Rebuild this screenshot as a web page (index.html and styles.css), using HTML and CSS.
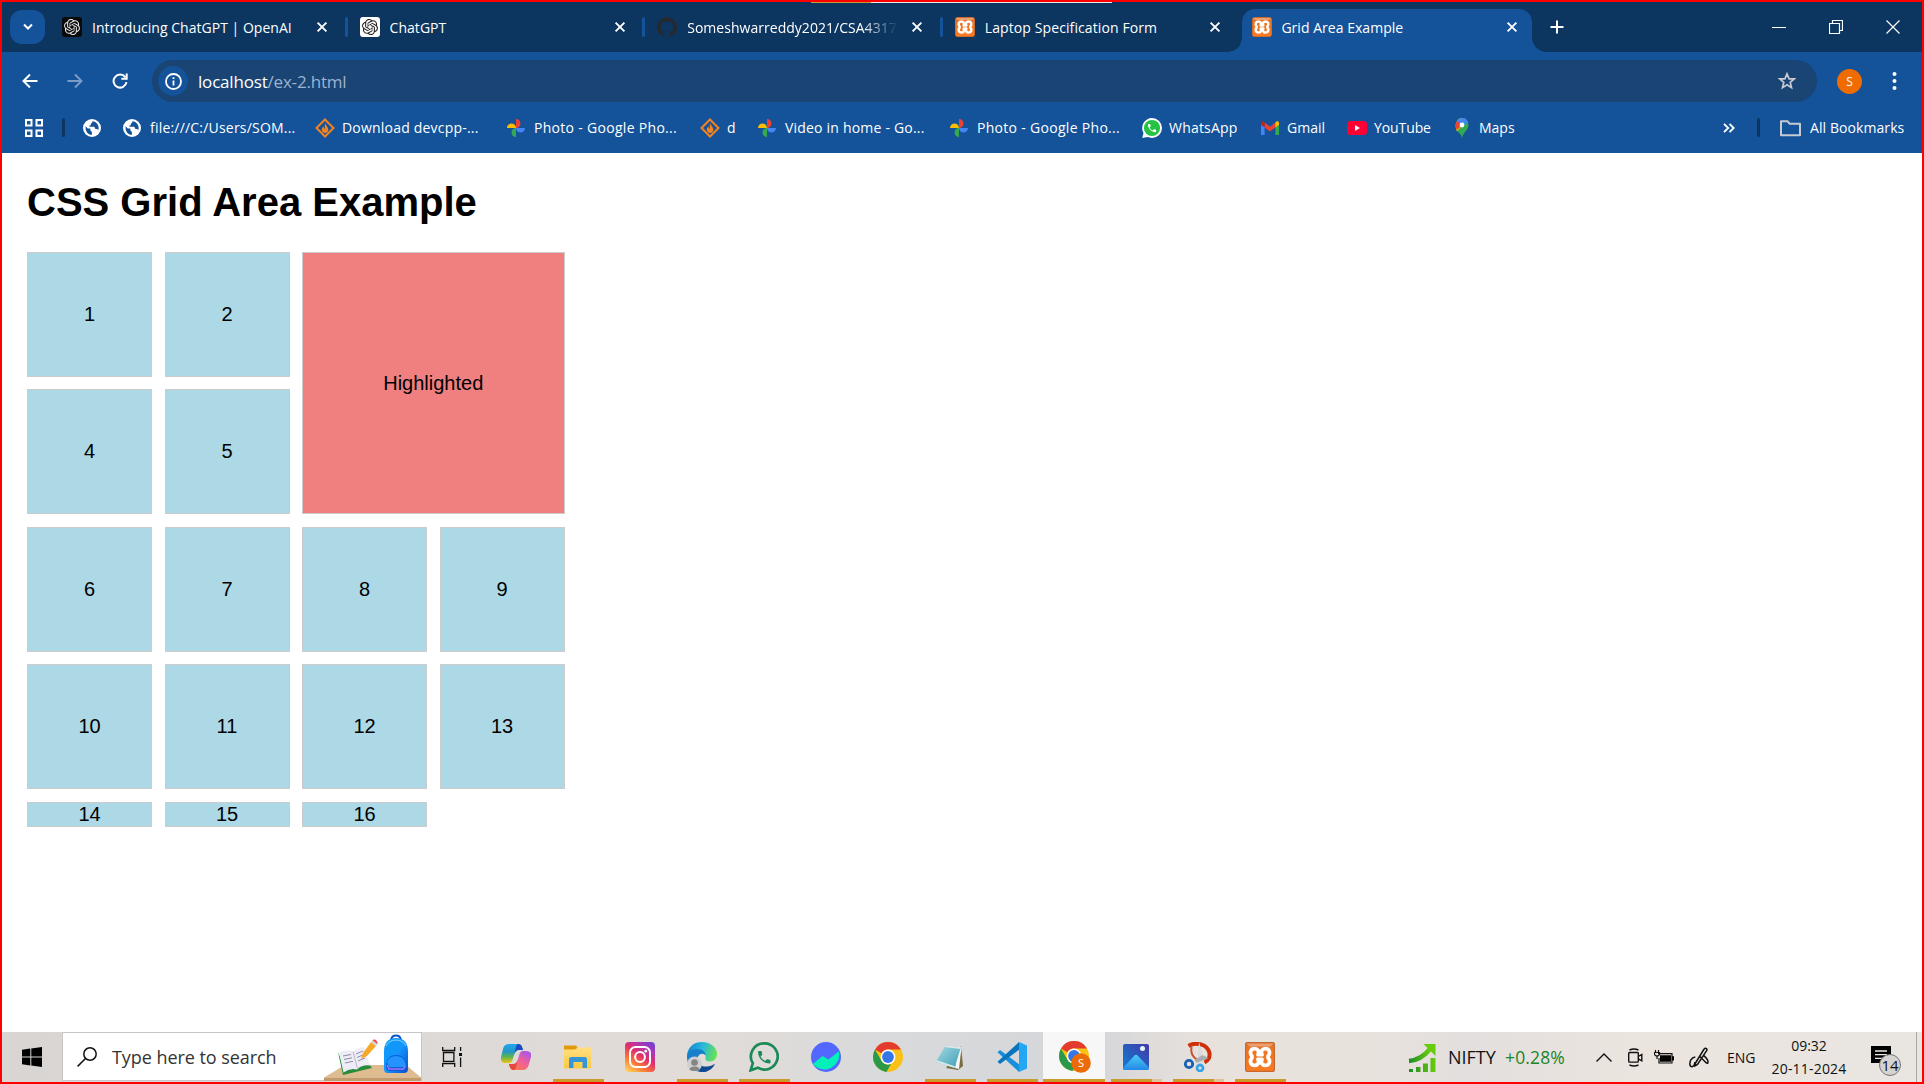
FILE: index.html
```html
<!DOCTYPE html>
<html lang="en">
<head>
<meta charset="utf-8">
<title>Grid Area Example</title>
<link rel="stylesheet" href="styles.css">
</head>
<body>
<svg class="defs" width="0" height="0" aria-hidden="true">
  <defs>
    <linearGradient id="g-orange" x1="0" y1="0" x2="0" y2="1"><stop offset="0" stop-color="#d8743a"/><stop offset=".3" stop-color="#ee7423"/><stop offset="1" stop-color="#fb7a24"/></linearGradient>
    <linearGradient id="g-insta" x1="0.1" y1="1" x2=".8" y2="0"><stop offset="0" stop-color="#ffd45e"/><stop offset=".3" stop-color="#fb7b35"/><stop offset=".58" stop-color="#e0306c"/><stop offset=".8" stop-color="#b235b0"/><stop offset="1" stop-color="#7a3fd0"/></linearGradient>
    <linearGradient id="g-cop1" x1="0" y1="0" x2="0" y2="1"><stop offset="0" stop-color="#1fa8ee"/><stop offset=".4" stop-color="#2497c5"/><stop offset=".65" stop-color="#56b357"/><stop offset="1" stop-color="#f3c411"/></linearGradient>
    <linearGradient id="g-cop2" x1=".8" y1="0" x2="0.2" y2="1"><stop offset="0" stop-color="#a855ea"/><stop offset=".5" stop-color="#f0609a"/><stop offset="1" stop-color="#fa7a48"/></linearGradient>
    <linearGradient id="g-folder" x1="0" y1="0" x2="0" y2="1"><stop offset="0" stop-color="#ffdf80"/><stop offset="1" stop-color="#fbc944"/></linearGradient>
    <linearGradient id="g-edge" x1="0" y1=".3" x2="1" y2=".5"><stop offset="0" stop-color="#1683d3"/><stop offset=".5" stop-color="#2ab8dc"/><stop offset="1" stop-color="#67e44d"/></linearGradient>
    <linearGradient id="g-note" x1="0" y1="0" x2="1" y2="1"><stop offset="0" stop-color="#a9dce4"/><stop offset="1" stop-color="#3a9cb4"/></linearGradient>
    <linearGradient id="g-photo" x1="1" y1="0" x2="0" y2="1"><stop offset="0" stop-color="#4439a8"/><stop offset="1" stop-color="#0e7fd4"/></linearGradient>
    <linearGradient id="g-hill" x1="0" y1="0" x2="0" y2="1"><stop offset="0" stop-color="#49cdf8"/><stop offset="1" stop-color="#2587e6"/></linearGradient>
    <linearGradient id="g-bag" x1="0" y1="0" x2="1" y2="1"><stop offset="0" stop-color="#0b9bf8"/><stop offset=".5" stop-color="#1496fb"/><stop offset="1" stop-color="#0c4ad0"/></linearGradient>
    <linearGradient id="g-bars" x1="0" y1="0" x2="1" y2="0"><stop offset="0" stop-color="#208a2a"/><stop offset="1" stop-color="#67cc0c"/></linearGradient>
    <symbol id="close" viewBox="0 0 12 12"><path d="M1.6 1.6l8.8 8.8M10.4 1.6l-8.8 8.8" stroke="#fff" stroke-width="1.9" fill="none"/></symbol>
    <symbol id="openai" viewBox="0 0 24 24"><path fill="currentColor" d="M22.2819 9.8211a5.9847 5.9847 0 0 0-.5157-4.9108 6.0462 6.0462 0 0 0-6.5098-2.9A6.0651 6.0651 0 0 0 4.9807 4.1818a5.9847 5.9847 0 0 0-3.9977 2.9 6.0462 6.0462 0 0 0 .7427 7.0966 5.98 5.98 0 0 0 .511 4.9107 6.051 6.051 0 0 0 6.5146 2.9001A5.9847 5.9847 0 0 0 13.2599 24a6.0557 6.0557 0 0 0 5.7718-4.2058 5.9894 5.9894 0 0 0 3.9977-2.9001 6.0557 6.0557 0 0 0-.7475-7.0729zm-9.022 12.6081a4.4755 4.4755 0 0 1-2.8764-1.0408l.1419-.0804 4.7783-2.7582a.7948.7948 0 0 0 .3927-.6813v-6.7369l2.02 1.1686a.071.071 0 0 1 .038.052v5.5826a4.504 4.504 0 0 1-4.4945 4.4944zm-9.6607-4.1254a4.4708 4.4708 0 0 1-.5346-3.0137l.142.0852 4.783 2.7582a.7712.7712 0 0 0 .7806 0l5.8428-3.3685v2.3324a.0804.0804 0 0 1-.0332.0615L9.74 19.9502a4.4992 4.4992 0 0 1-6.1408-1.6464zM2.3408 7.8956a4.485 4.485 0 0 1 2.3655-1.9728V11.6a.7664.7664 0 0 0 .3879.6765l5.8144 3.3543-2.0201 1.1685a.0757.0757 0 0 1-.071 0l-4.8303-2.7865A4.504 4.504 0 0 1 2.3408 7.872zm16.5963 3.8558L13.1038 8.364 15.1192 7.2a.0757.0757 0 0 1 .071 0l4.8303 2.7913a4.4944 4.4944 0 0 1-.6765 8.1042v-5.6772a.79.79 0 0 0-.407-.667zm2.0107-3.0231l-.142-.0852-4.7735-2.7818a.7759.7759 0 0 0-.7854 0L9.409 9.2297V6.8974a.0662.0662 0 0 1 .0284-.0615l4.8303-2.7866a4.4992 4.4992 0 0 1 6.6802 4.66zM8.3065 12.863l-2.02-1.1638a.0804.0804 0 0 1-.038-.0567V6.0742a4.4992 4.4992 0 0 1 7.3757-3.4537l-.142.0805L8.704 5.459a.7948.7948 0 0 0-.3927.6813zm1.0976-2.3654l2.602-1.4998 2.6069 1.4998v2.9994l-2.5974 1.4997-2.6067-1.4997Z"/></symbol>
    <symbol id="xampp" viewBox="0 0 30 30">
      <rect width="30" height="30" rx="2.2" fill="#c4682c"/><rect x="1.2" y="1.2" width="27.6" height="27.6" rx="1.6" fill="url(#g-orange)"/><path d="M1.5 1.5h27l-3 3h-21z" fill="#f6b083" opacity=".7"/>
      <path fill="none" stroke="#fff" stroke-width="3.800" stroke-linejoin="round" d="M13 12.700c1.700-3.700-.5-6.100-3.400-6.100-4.100 0-5.300 4.700-2.700 7.400v2c-2.600 2.700-1.400 7.400 2.700 7.400 2.900 0 5.100-2.400 3.400-6.100h4c-1.700 3.700.5 6.100 3.400 6.100 4.100 0 5.300-4.700 2.700-7.400v-2c2.600-2.700 1.400-7.400-2.700-7.400-2.900 0-5.100 2.400-3.400 6.100z"/>
    </symbol>
    <symbol id="globe" viewBox="0 0 18 18"><circle cx="9" cy="9" r="9" fill="#fff"/><path d="M2.600 7.200l2.200 2.200h2.600v2.200l1.500 1.500v2.700c-4-.2-6.700-3.500-6.300-8.600zM9.200 2.300c.5 1.200-.2 1.900-1.300 2.100v1.900H6.500v1.500h4.800l1.100 2.200h1.800l1 1.300c1.500-4-.9-8.600-6-9z" fill="#14529a"/></symbol>
    <symbol id="flame" viewBox="0 0 20 20"><path d="M8.300 16.800L1.500 10 10 1.500l1.800 1.700M11.700 3.200L18.500 10 10 18.500l-1.800-1.700" fill="none" stroke="#f58220" stroke-width="2"/><path d="M10.400 4.800c-.3 2.600 2.900 4 2.900 6.700 0 2-1.400 3.500-3.200 3.500S6.800 13.600 6.800 11.600c0-1.500.9-2.500 1.800-3.300 0 1.500.5 2 .9 2.700.8-1.800-.4-4 .9-6.200z" fill="#f58220"/></symbol>
    <symbol id="gphotos" viewBox="0 0 18 18"><path fill="#ea4335" d="M9 0c2.600 0 4.500 2 4.500 4.500S11.500 9 9 9z"/><path fill="#4285f4" d="M18 9c0 2.600-2 4.500-4.500 4.500S9 11.600 9 9z"/><path fill="#34a853" d="M9 18c-2.600 0-4.500-2-4.500-4.500S6.500 9 9 9z"/><path fill="#fbbc04" d="M0 9c0-2.600 2-4.500 4.500-4.500S9 6.500 9 9z"/></symbol>
    <symbol id="phone" viewBox="0 0 24 24"><path fill="currentColor" d="M6.620 10.790c1.440 2.830 3.760 5.140 6.590 6.590l2.200-2.200c.27-.27.67-.36 1.020-.24 1.120.37 2.330.57 3.570.57.55 0 1 .45 1 1V20c0 .55-.45 1-1 1-9.390 0-17-7.610-17-17 0-.55.45-1 1-1h3.500c.55 0 1 .45 1 1 0 1.250.2 2.450.57 3.570.11.35.03.74-.25 1.020l-2.200 2.200z"/></symbol>
    <symbol id="chrome" viewBox="0 0 30 30">
      <circle cx="15" cy="15" r="15" fill="#fbc116"/><path fill="#e33b2e" d="M2 7.500A15 15 0 0 1 28 7.500H15a7.500 7.500 0 0 0-6.500 3.750z"/><path fill="#2a9a48" d="M2 7.500L8.500 18.750A7.500 7.500 0 0 0 15 22.500l3-.6-4.500 8A15 15 0 0 1 2 7.500z"/><circle cx="15" cy="15" r="7.400" fill="#fff"/><circle cx="15" cy="15" r="5.900" fill="#3577e8"/>
    </symbol>
  </defs>
</svg>

<div class="screen">
  <header class="browser">
    <div class="snap-hint"></div>
    <div class="tabstrip">
      <button class="tab-search" aria-label="Search tabs"><svg width="10" height="8" viewBox="0 0 10 8"><path d="M1 1.500l4 4 4-4" fill="none" stroke="#fff" stroke-width="2"/></svg></button>
      <div class="tab"><span class="fav dark"><svg width="16" height="16"><use href="#openai"/></svg></span><span class="tab-title">Introducing ChatGPT | OpenAI</span><svg class="x" width="12" height="12"><use href="#close"/></svg></div>
      <div class="tab sep"><span class="fav light"><svg width="16" height="16"><use href="#openai"/></svg></span><span class="tab-title">ChatGPT</span><svg class="x" width="12" height="12"><use href="#close"/></svg></div>
      <div class="tab sep"><svg class="fav" viewBox="0 0 24 24"><path fill="#24292f" d="M12 .297c-6.630 0-12 5.373-12 12 0 5.303 3.438 9.800 8.205 11.385.6.113.82-.258.82-.577 0-.285-.01-1.040-.015-2.040-3.338.724-4.042-1.610-4.042-1.610C4.422 18.070 3.633 17.700 3.633 17.700c-1.087-.744.084-.729.084-.729 1.205.084 1.838 1.236 1.838 1.236 1.070 1.835 2.809 1.305 3.495.998.108-.776.417-1.305.76-1.605-2.665-.3-5.466-1.332-5.466-5.930 0-1.310.465-2.380 1.235-3.220-.135-.303-.54-1.523.105-3.176 0 0 1.005-.322 3.300 1.230.96-.267 1.980-.399 3-.405 1.020.006 2.040.138 3 .405 2.280-1.552 3.285-1.230 3.285-1.230.645 1.653.24 2.873.12 3.176.765.84 1.230 1.910 1.230 3.220 0 4.610-2.805 5.625-5.475 5.920.42.36.81 1.096.81 2.220 0 1.606-.015 2.896-.015 3.286 0 .315.21.69.825.57C20.565 22.092 24 17.592 24 12.297c0-6.627-5.373-12-12-12"/></svg><span class="tab-title fade">Someshwarreddy2021/CSA4317</span><svg class="x" width="12" height="12"><use href="#close"/></svg></div>
      <div class="tab sep"><svg class="fav"><use href="#xampp"/></svg><span class="tab-title t-laptop">Laptop Specification Form</span><svg class="x" width="12" height="12"><use href="#close"/></svg></div>
      <div class="tab active"><svg class="fav"><use href="#xampp"/></svg><span class="tab-title">Grid Area Example</span><svg class="x" width="12" height="12"><use href="#close"/></svg></div>
      <svg class="newtab" width="14" height="14" viewBox="0 0 14 14"><path d="M7 .5v13M.5 7h13" stroke="#fff" stroke-width="2"/></svg>
      <div class="winctl">
        <svg width="14" height="14" viewBox="0 0 14 14"><path d="M0 7.500h14" stroke="#fff"/></svg>
        <svg width="14" height="14" viewBox="0 0 14 14"><path d="M.5 3.500h10v10h-10zM3.500 3.500v-3h10v10h-3" fill="none" stroke="#fff" stroke-width="1.200"/></svg>
        <svg width="14" height="14" viewBox="0 0 14 14"><path d="M.5.5l13 13M13.500.5l-13 13" stroke="#fff" stroke-width="1.200"/></svg>
      </div>
    </div>

    <div class="toolbar">
      <svg class="nav" viewBox="0 0 16 16"><path d="M15.500 8H2M8 1.500L1.500 8 8 14.500" fill="none" stroke="#fff" stroke-width="2"/></svg>
      <svg class="nav" viewBox="0 0 16 16"><path d="M.5 8H14M8 1.500L14.500 8 8 14.500" fill="none" stroke="#7c9cc8" stroke-width="1.900"/></svg>
      <svg class="nav" viewBox="0 0 16 16"><path d="M13.300 4.200A6.500 6.500 0 1 0 14.500 9.200M14.700.6v5.200H9.300" fill="none" stroke="#fff" stroke-width="2"/></svg>
      <div class="omnibox">
        <span class="info"><svg width="17" height="17" viewBox="0 0 17 17"><circle cx="8.500" cy="8.500" r="7.500" fill="none" stroke="#fff" stroke-width="1.800"/><path d="M8.500 7.500v5M8.500 4.300v1.800" stroke="#fff" stroke-width="1.800"/></svg></span>
        <span class="url"><b>localhost</b>/ex-2.html</span>
        <svg class="star" width="18" height="18" viewBox="0 0 18 18"><path d="M9 1.800l2.100 5h5.200l-4.100 3.500 1.300 5.300L9 12.800l-4.500 2.800 1.300-5.300-4.100-3.500h5.200z" fill="none" stroke="#c7cad2" stroke-width="1.700"/></svg>
      </div>
      <span class="avatar">S</span>
      <svg class="menu" width="5" height="18" viewBox="0 0 5 18"><circle cx="2.500" cy="2" r="2" fill="#fff"/><circle cx="2.500" cy="9" r="2" fill="#fff"/><circle cx="2.500" cy="16" r="2" fill="#fff"/></svg>
    </div>

    <nav class="bookmarks">
      <svg class="apps" width="18" height="18" viewBox="0 0 18 18"><path d="M1 1h5.500v5.500H1zM11.500 1H17v5.500h-5.500zM1 11.500h5.500V17H1zM11.500 11.500H17V17h-5.500z" fill="none" stroke="#fff" stroke-width="2"/></svg>
      <span class="divider"></span>
      <a class="bm w40"><svg class="inset"><use href="#globe"/></svg></a>
      <a class="bm w192"><svg class="inset"><use href="#globe"/></svg><span class="wide">file:///C:/Users/SOM...</span></a>
      <a class="bm w192"><svg><use href="#flame"/></svg><span class="wide">Download devcpp-...</span></a>
      <a class="bm w193"><svg class="inset"><use href="#gphotos"/></svg><span class="wider">Photo - Google Pho...</span></a>
      <a class="bm w58"><svg><use href="#flame"/></svg><span>d</span></a>
      <a class="bm w192"><svg class="inset"><use href="#gphotos"/></svg><span class="wide">Video in home - Go...</span></a>
      <a class="bm w192"><svg class="inset"><use href="#gphotos"/></svg><span class="wider">Photo - Google Pho...</span></a>
      <a class="bm w118"><svg viewBox="0 0 20 20"><path d="M10 0a10 10 0 0 1 0 20l-4.500-1.100L.3 20l1.200-5A10 10 0 0 1 10 0z" fill="#fff"/><circle cx="10" cy="10" r="8.100" fill="#25c244"/><svg x="4.500" y="4.500" width="11" height="11" class="white"><use href="#phone"/></svg></svg><span class="wide">WhatsApp</span></a>
      <a class="bm w87"><svg viewBox="0 0 20 20"><path d="M1 5v12h3.600V8z" fill="#4285f4"/><path d="M19 5v12h-3.600V8z" fill="#34a853"/><path d="M4.600 4.500L10 8.700l5.400-4.200v5L10 13.500 4.600 9.500z" fill="#ea4335"/><path d="M1 5.200C1 3 3.200 2.600 4.600 4.500v5L1 6.800z" fill="#c5221f"/><path d="M19 5.200c0-2.200-2.200-2.600-3.600-.7v5L19 6.800z" fill="#fbbc04"/></svg><span>Gmail</span></a>
      <a class="bm w104"><svg viewBox="0 0 20 20"><rect y="3" width="20" height="14" rx="3.500" fill="#f03"/><path d="M8 7l5 3-5 3z" fill="#fff"/></svg><span class="tight">YouTube</span></a>
      <a class="bm"><svg viewBox="0 0 20 20"><path d="M3.700 8.500a6.300 8 0 0 1 12.800-1.600c.3 5-4.400 6.100-6.500 13.100-.6-5-5.900-5.600-6.300-11.500z" fill="#34a853"/><path d="M3.700 7A6.300 7 0 0 1 10 .3L10 7.500l-5 6c-.9-2.200-1.400-4-1.300-6.500z" fill="#fbbc04"/><path d="M3.700 7c0-2 .8-3.500 1.600-4.500L10 6.500 5 12c-1-1.700-1.400-3-1.300-5z" fill="#ea4335"/><path d="M5.300 2.500C8-.7 14-1.300 16 4L10 9z" fill="#4285f4"/><circle cx="10" cy="7" r="2.400" fill="#fff"/></svg><span>Maps</span></a>
      <svg class="more" width="12" height="10" viewBox="0 0 12 10"><path d="M1 .8L5.200 5 1 9.200M6.500.8L10.700 5 6.500 9.200" fill="none" stroke="#fff" stroke-width="1.900"/></svg>
      <span class="divider d2"></span>
      <svg class="folder" width="21" height="18" viewBox="0 0 21 18"><path d="M1 2.200h6.500l2 2.500H20v11.500H1z" fill="none" stroke="#c7cad2" stroke-width="2" stroke-linejoin="round"/></svg>
      <span class="all">All Bookmarks</span>
    </nav>
  </header>

  <main class="page">
    <h1>CSS Grid Area Example</h1>
    <div class="grid">
      <div class="cell">1</div><div class="cell">2</div><div class="cell highlight">Highlighted</div>
      <div class="cell">4</div><div class="cell">5</div>
      <div class="cell">6</div><div class="cell">7</div><div class="cell">8</div><div class="cell">9</div>
      <div class="cell">10</div><div class="cell">11</div><div class="cell">12</div><div class="cell">13</div>
      <div class="cell">14</div><div class="cell">15</div><div class="cell">16</div>
    </div>
  </main>

  <footer class="taskbar">
    <div class="start"><svg width="20" height="20" viewBox="0 0 20 20"><path d="M0 2.800L8.300 1.500v8H0zM9.300 1.400L20 0v9.500H9.300zM0 10.500h8.300v8L0 17.200zM9.300 10.500H20V20L9.300 18.600z" fill="#000"/></svg></div>
    <div class="search">
      <svg class="glass" width="20" height="20" viewBox="0 0 20 20"><circle cx="13" cy="7" r="6.200" fill="none" stroke="#111" stroke-width="1.500"/><path d="M8.500 11.500L.6 19.400" stroke="#111" stroke-width="1.500"/></svg>
      <span class="placeholder">Type here to search</span>
      <svg class="art" width="97" height="47" viewBox="0 0 97 47">
        <path d="M0 43.500L21 31h61l15 12.500z" fill="#dfbb90"/><path d="M0 43.500h97V47H0z" fill="#c39a6b"/>
        <path d="M14 18l5 23 29-7-3-4-24 5z" fill="#288c3c"/><path d="M15 18.500q8-4 14-1 7-5 11-4l6 18q-8-1-13 4-7-2-13.500 3z" fill="#eeedf7"/><path d="M29 17.500l4.500 17" stroke="#b7b5cc" fill="none"/><path d="M19 22l8-1.500M20 25.500l8-1.700M21 29l8-1.700M32 20l7-3M33 23.500l7-3M34 27l7-3" stroke="#8e8da5" fill="none"/>
        <path d="M37 25l2-6 8-11 5 4-9 10z" fill="#f6a928"/><path d="M47 8l1.500-1.700 5 4L52 12z" fill="#d2d5dc"/><path d="M48.500 6.300c2-2 5.500.5 5 4z" fill="#ee4d4d"/>
        <path d="M67 6c1-6 9-6 10 0" fill="none" stroke="#0a56c8" stroke-width="2"/><path d="M60 18q0-14 12-14t12 14v17q0 4-4 4H64q-4 0-4-4z" fill="url(#g-bag)"/><path d="M62 12q3-6 10-6t10 6" fill="none" stroke="#7fd0ff"/><path d="M62 33q0-12 10-12t10 12q0 4-4 4H66q-4 0-4-4z" fill="#0a5ee0"/><path d="M63 28q2-6 9-6t9 6l1 5H65z" fill="#2494fc"/><path d="M63 31l2 4h14l2-2" fill="none" stroke="#a174f2" stroke-width="1.500"/>
      </svg>
    </div>
    <div class="taskview"><svg width="20" height="20" viewBox="0 0 20 20"><path d="M.7 0v3.500h12V0M.7 20v-3.500h12V20M1.500 5.500h10.400v8.900H1.500zM18.600 0v4M18.600 10.500V20" fill="none" stroke="#111" stroke-width="1.300"/><path d="M17 6h3v3h-3z" fill="#111"/></svg></div>
    <div class="app"><svg viewBox="0 0 30 30"><path d="M9 2h8c3 0 4 2 5 6h-4c-3 0-4 2-5 5l-1.500 5C10 22 8 21 5 21c-4 0-6-2-5-6l2-8c1-4 3-5 7-5z" fill="url(#g-cop1)"/><path d="M17 2c3 0 4 2 5 6h-4c-3 0-4 2-5 5l2-8c.4-1.600 1-3 2-3z" fill="#1b49c4"/><path d="M21 28h-8c-3 0-4-2-5-6h4c3 0 4-2 5-5l1.500-5c1.500-4 3.500-3 6.500-3 4 0 6 2 5 6l-2 7c-1 4-3 6-7 6z" fill="url(#g-cop2)"/><path d="M13 28c-3 0-4-2-5-6h4c3 0 4-2 5-5l-2 8c-.4 1.600-1 3-2 3z" fill="#e3473e"/></svg></div>
    <div class="app open"><svg viewBox="0 0 30 30"><path d="M1 3.500h12l2 3H27v5H1z" fill="#e09b0d"/><path d="M1 7.500h11l3-2h13v20q0 1-1 1H2q-1 0-1-1z" fill="url(#g-folder)"/><path d="M6 26V17q0-2 2-2h14q2 0 2 2v9h-4.500v-6h-9v6z" fill="#3895d5"/></svg></div>
    <div class="app"><svg viewBox="0 0 30 30"><rect width="30" height="30" rx="4" fill="url(#g-insta)"/><rect x="5" y="5" width="20" height="20" rx="5.500" fill="none" stroke="#fff" stroke-width="2"/><circle cx="15" cy="15" r="4.900" fill="none" stroke="#fff" stroke-width="2"/><circle cx="20.800" cy="9.200" r="1.400" fill="#fff"/></svg></div>
    <div class="app open"><svg viewBox="0 0 30 30"><path d="M0 15C0 6 6 0 15 0s15 6 15 12c0 5-3.500 7.500-7.500 7.500-3 0-4.500-1.500-4-3 1-3-1-5-4.500-5C9 11.500 4 13 3 20z" fill="url(#g-edge)"/><path d="M0 15C0 9 5 7 10 7c5.500 0 8.500 3 8.500 6-3-2.500-7-1-8 3-1 5 2.500 10 8 12-9 5-18.500-2-18.500-13z" fill="#1680cd"/><path d="M10.500 16c-1 6 4 9 9 8.500 4 0 7-2 8.500-2.500-3 6-9 9.200-15 7.800-4-2-6-9-2.500-13.800z" fill="#114a91"/><circle cx="7.500" cy="22" r="7.500" fill="#cfcfcf"/><circle cx="7.500" cy="20.500" r="3.300" fill="#858585"/><path d="M2.500 28q0-3.500 5-3.500t5 3.500q-5 2-10 0z" fill="#858585"/></svg></div>
    <div class="app open"><svg viewBox="0 0 30 30"><path d="M15.500 1.400a13.100 13.100 0 1 1-6.700 24.300L1.600 28.300l2.200-7A13.100 13.100 0 0 1 15.500 1.400z" fill="none" stroke="#1a8a57" stroke-width="2.700"/><svg x="7" y="7" width="16.500" height="16.500" class="green"><use href="#phone"/></svg></svg></div>
    <div class="app"><svg viewBox="0 0 30 30"><circle cx="15" cy="15" r="15" fill="#5367ff"/><path d="M1.800 22l9.700-8 6 3.500L28 9.200A15 15 0 0 1 1.800 22z" fill="#04f0b8"/></svg></div>
    <div class="app"><svg><use href="#chrome"/></svg></div>
    <div class="app open"><svg viewBox="0 0 30 30"><path d="M26 4l2 20-5 4-12-2z" fill="#7a6d45"/><path d="M23 4l3.500 1.500L24 27l-4-1z" fill="#f4f4f0"/><path d="M10.500 3.500L26 5l-6.500 21L.8 20z" fill="url(#g-note)"/><path d="M10.500 3.500L26 5l-.8 2L10 5z" fill="#e6e6e6"/><path d="M.8 20l18.700 6 .5-1.800-18-6z" fill="#d7e7e8"/></svg></div>
    <div class="app open"><svg viewBox="0 0 30 30"><path d="M.5 10.300L3 8l20 15-1 7z" fill="#178fdb"/><path d="M.5 19.700L3 22 23 7l-1-7z" fill="#0975bd"/><path d="M22 0l8 3.500v23L22 30z" fill="#24a7f2"/></svg></div>
    <div class="app current"><svg class="with-badge" viewBox="0 0 32 32"><svg width="30" height="30"><use href="#chrome"/></svg><circle cx="22" cy="22" r="9.800" fill="#ec6b06"/><text x="22" y="26" text-anchor="middle" class="badge-s">S</text></svg></div>
    <div class="app open many"><svg viewBox="0 0 30 30"><rect x="2" y="2" width="26" height="26" rx="2" fill="url(#g-photo)"/><path d="M2 26l11.500-12.500q1.500-1.500 3 0L28 25.500q0 2.500-2 2.500H4q-2 0-2-2z" fill="url(#g-hill)"/><circle cx="21.500" cy="6.500" r="2.500" fill="#e8f4fb"/></svg></div>
    <div class="app open many"><svg viewBox="0 0 30 30"><g transform="translate(1.500 0)"><path d="M4 4C11-.5 23 2 25 11c.6 5-2 8-5 9.500" fill="none" stroke="#cf3008" stroke-width="4"/><path d="M7 5c-1 5 1 10 6 13" fill="none" stroke="#c8512f" stroke-width="2"/><path d="M14.500 0l4.500 16-1 5-5-3z" fill="#d9dadb"/><path d="M18 13l6 3-12 5-2-3z" fill="#a9adb0"/><circle cx="4.500" cy="22" r="3.700" fill="none" stroke="#1661b4" stroke-width="2.800"/><circle cx="15.500" cy="26" r="3" fill="none" stroke="#36a4e8" stroke-width="2.800"/></g></svg></div>
    <div class="app open"><svg><use href="#xampp"/></svg></div>

    <div class="tray">
      <svg class="stock" width="28" height="29" viewBox="0 0 28 29"><path d="M1 18C12 17 18 11 22 6" fill="none" stroke="url(#g-bars)" stroke-width="4.500"/><path d="M15.500 1h12v12z" fill="#67cc0c"/><path d="M1 26h4v3H1zM8 24h4.500v5H8zM15 20.500h5V29h-5zM22.500 15h5v14h-5z" fill="url(#g-bars)"/></svg>
      <span class="nifty">NIFTY</span><span class="gain">+0.28%</span>
      <svg class="chev" width="16" height="9" viewBox="0 0 16 9"><path d="M.5 8.500L8 1l7.500 7.500" fill="none" stroke="#111" stroke-width="1.400"/></svg>
      <svg class="cam" width="15" height="19" viewBox="0 0 15 19"><path d="M1.500 4.500h8q.8 0 .8.800v8q0 .8-.8.800h-8q-.8 0-.8-.8v-8q0-.8.800-.8zM10.300 8.500l3.500-2v6.300l-3.500-2M1.500 2Q6 0 10.500 2M1.500 17q4.500 2 9 0" fill="none" stroke="#111" stroke-width="1.400"/></svg>
      <svg class="bat" width="20" height="14" viewBox="0 0 20 14"><path d="M4 3.600h14v9.400H5V8" fill="none" stroke="#111" stroke-width="1.200"/><path d="M6 5.200h11v6.600H6zM18 6.300h2v4.200h-2z" fill="#000"/><path d="M1.500 0v2.500M4.500 0v2.500M.5 2.500h5v2.200l-1.500 1.200H2L.5 4.700zM3 5.500V9" fill="none" stroke="#111" stroke-width="1.200"/></svg>
      <svg class="pen" width="21" height="21" viewBox="0 0 21 21"><path d="M6.500 16L14.800 2.500q1.500-2 2.700-.8 1 .8-.2 2.500L8.500 17.500 6 18.800zM6.300 10C2 10.500.5 14.500 1 18q.5 2.200 2.500 1.500T6 15M11 9.500l6 6.200q2 1.600 2-.8t-4-6" fill="none" stroke="#111" stroke-width="1.500"/></svg>
      <span class="lang">ENG</span>
      <div class="clock"><span>09:32</span><span class="date">20-11-2024</span></div>
      <div class="notif"><svg width="20" height="23" viewBox="0 0 20 23"><path d="M0 0h20v17h-5v5l-5-5H0z" fill="#000"/><path d="M4 5h12M4 8.700h12M4 12.400h7" stroke="#eee9e4" stroke-width="1.300"/></svg><span class="count">14</span></div>
    </div>
  </footer>
</div>
</body>
</html>
```

FILE: styles.css
```css
* { box-sizing: border-box; }
body { margin: 0; font-family: "Open Sans", "Noto Sans", sans-serif; }
.defs { position: absolute; }
svg { display: block; flex: none; }
.screen {
  width: 1924px; height: 1084px; border: 2px solid #f00; background: #fff;
  display: flex; flex-direction: column; overflow: hidden;
}

/* Browser chrome */
.browser { position: relative; height: 151px; background: #14529a; color: #fff; flex: none; }
.snap-hint { position: absolute; left: 809px; top: 0; width: 301px; height: 1px; background: linear-gradient(90deg, #c99a30 60px, #e6e8ea 60px); }
.tabstrip { height: 50px; background: #0c3560; display: flex; align-items: center; padding-left: 8px; }
.tab-search { width: 35px; height: 34px; border: 0; border-radius: 12px; background: #14529a; padding: 0; display: grid; place-items: center; margin-right: 5px; }
.tab { position: relative; width: 297.600px; height: 42px; display: flex; align-items: center; padding-left: 12px; flex: none; }
.fav { width: 20px; height: 20px; border-radius: 3px; margin-right: 10px; display: grid; place-items: center; flex: none; }
.fav.dark { background: #0a0a0a; color: #e6e6e6; }
.fav.light { background: #fff; color: #222; }
.tab-title { width: 211px; padding-top: 1px; font-size: 14px; letter-spacing: .03px; white-space: nowrap; line-height: 20px; overflow: hidden; }
.t-laptop { letter-spacing: .1px; }
.fade { -webkit-mask-image: linear-gradient(90deg, #000 175px, transparent 211px); mask-image: linear-gradient(90deg, #000 175px, transparent 211px); }
.x { margin-left: 13px; }
.tab.sep::before { content: ""; position: absolute; left: -3px; top: 11px; width: 3px; height: 20px; border-radius: 2px; background: #14529a; }
.tab.active { width: 290px; height: 43px; padding: 0 0 7px 10px; margin-left: 2px; background: #14529a; border-radius: 13px 13px 0 0; align-self: flex-end; }
.tab.active::before, .tab.active::after { content: ""; position: absolute; bottom: 0; width: 14px; height: 14px; }
.tab.active::before { left: -14px; background: radial-gradient(circle at 0 0, #0c3560 13.500px, #14529a 14px); }
.tab.active::after { right: -14px; background: radial-gradient(circle at 100% 0, #0c3560 13.500px, #14529a 14px); }
.tab.active .fav { margin-right: 9px; }
.tab.active .x { margin-left: 14px; }
.newtab { margin-left: 18px; }
.winctl { margin-left: auto; display: flex; gap: 43px; padding-right: 22px; }

.toolbar { height: 58px; display: flex; align-items: center; padding-left: 20px; }
.tabstrip { background: radial-gradient(circle at 12px 62px, #14529a 12px, transparent 12.500px), #0c3560; }
.nav { width: 16px; height: 16px; margin-right: 29px; }
.omnibox { width: 1665px; height: 42px; border-radius: 21px; background: #194474; display: flex; align-items: center; padding: 0 21px 0 6px; margin-left: -5px; }
.info { width: 30px; height: 30px; border-radius: 50%; background: #14529a; display: grid; place-items: center; }
.url { margin-left: 10px; font-size: 17px; letter-spacing: -.19px; color: #9db3d0; }
.url b { font-weight: 400; color: #fff; }
.star { margin-left: auto; }
.avatar { width: 25px; height: 25px; border-radius: 50%; background: #f06c00; margin-left: 20px; font-size: 12px; display: grid; place-items: center; }
.menu { margin-left: 30px; }

.bookmarks { height: 35px; display: flex; align-items: center; padding-left: 23px; font-size: 14px; white-space: nowrap; }
.divider { width: 3px; height: 19px; border-radius: 2px; background: #0c3560; margin: 0 17px 0 19px; }
.bm { display: flex; align-items: center; gap: 7px; flex: none; }
.bm > svg { width: 20px; height: 20px; margin-left: 1px; }
.bm > .inset { padding: 1px; margin: 0 1px 0 0; }
.tight { letter-spacing: -.1px; }
.wide { letter-spacing: .2px; }
.wider { letter-spacing: .3px; }
.white { color: #fff; }
.green { color: #1a8a57; }
.w40 { width: 40px; }
.w58 { width: 58px; }
.w87 { width: 87px; }
.w104 { width: 105px; }
.w118 { width: 118px; }
.w192 { width: 192px; }
.w193 { width: 193px; }
.more { margin-left: auto; }
.divider.d2 { margin: 0 20px 0 22px; }
.folder { margin-right: 9px; }
.all { width: 112px; letter-spacing: .08px; }

/* Page content at 125% */
.page { flex: 1; padding: 25.800px 25px 0; font-family: "Liberation Sans", Arial, sans-serif; font-size: 20px; color: #000; }
.page h1 { margin: 0 0 27px; font-size: 40px; line-height: 46px; }
.grid { display: grid; grid-template-columns: repeat(4, 125px); grid-template-rows: repeat(4, 125px); gap: 12.500px; line-height: 23px; }
.cell { background: #add8e6; border: 1px solid #ccc; display: flex; align-items: center; justify-content: center; }
.highlight { grid-area: 1 / 3 / 3 / 5; background: #f08080; }

/* Taskbar */
.taskbar { height: 50px; flex: none; display: flex; color: #111; background: linear-gradient(90deg, #d8d5d2, #dedad7 25%, #e2dcd7 36%, #d9dadc 46%, #d5d6d9 57%, #e9e2dc 63%, #e8e2dd 72%, #e3dfde 76%, #ece5df 86%, #e9e5e1); }
.start { width: 60px; display: grid; place-items: center; }
.search { width: 360px; height: 49px; background: #fff; border: 1px solid #c6c6c6; display: flex; align-items: center; padding-left: 14px; }
.placeholder { margin-left: 15px; font-size: 18px; letter-spacing: -.06px; color: #333; }
.art { margin: 1px 0 0 auto; }
.taskview { width: 60px; display: grid; place-items: center; }
.app { width: 62px; display: grid; place-items: center; position: relative; flex: none; }
.taskview + .app { margin-left: 3px; }
.app > svg { width: 30px; height: 30px; }
.app.open::after { content: ""; position: absolute; left: 6px; bottom: 0; width: 51px; height: 3px; background: #c99a2c; }
.app.many::after { background: linear-gradient(90deg, #c99a2c 41px, #dcc498 41px); }
.app.current { background: #f7f7f7; border-bottom: 3px solid #c99a2c; padding: 3px 0 0 1px; }
.app > .with-badge { width: 32px; height: 32px; }
.badge-s { font-size: 11px; fill: #fff; }
.tray { margin-left: auto; display: flex; align-items: center; width: 514px; }
.nifty { margin-left: 12px; width: 57px; font-size: 18px; }
.gain { width: 91px; font-size: 17.500px; letter-spacing: .15px; color: #1c8527; }
.cam { margin-left: 16px; }
.bat { margin-left: 11px; }
.pen { margin-left: 15px; }
.lang { margin-left: 17px; width: 38px; font-size: 14px; }
.clock { width: 88px; display: flex; flex-direction: column; align-items: center; font-size: 14px; line-height: 23px; }
.date { letter-spacing: .2px; }
.notif { position: relative; margin-left: 18px; width: 45px; height: 28px; padding-top: 3px; }
.count { position: absolute; left: 8px; top: 11px; width: 22px; height: 22px; border-radius: 50%; border: 1px solid #777; background: #d5d3d1; font-size: 15px; line-height: 20px; text-align: center; }
.tray::after { content: ""; width: 1px; height: 50px; background: #aaa7a4; }
```
